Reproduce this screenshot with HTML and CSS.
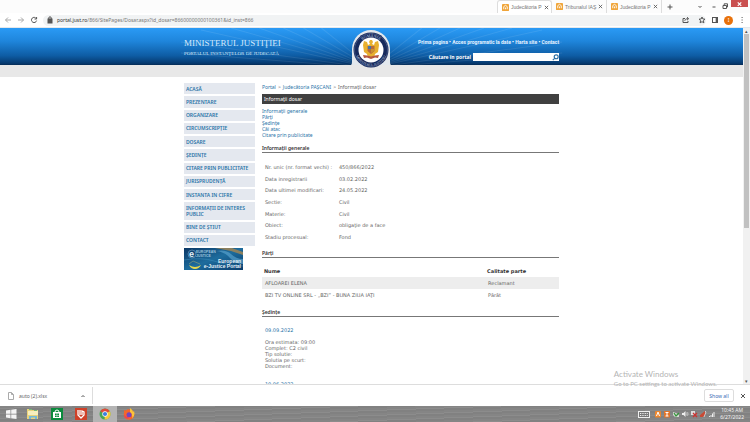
FILE: index.html
```html
<!DOCTYPE html>
<html lang="ro">
<head>
<meta charset="utf-8">
<title>Informaţii dosar</title>
<link rel="stylesheet" href="styles.css">
</head>
<body>
<header class="tabbar">
  <div class="tabs">
    <div class="tab active"><svg class="fav" viewBox="0 0 8 8"><rect width="8" height="8" rx="1" fill="#f0a53a"/><path d="M2 6V3l2-1.500 2 1.500v3M4 4v2" stroke="#fff" fill="none"/></svg><span class="tab-title">Judecătoria P</span><button class="x" aria-label="Închide"><svg viewBox="0 0 6 6"><path d="M1 1l4 4M5 1L1 5"/></svg></button></div>
    <div class="tab"><svg class="fav" viewBox="0 0 8 8"><rect width="8" height="8" rx="1" fill="#f0a53a"/><path d="M2 6V3l2-1.500 2 1.500v3M4 4v2" stroke="#fff" fill="none"/></svg><span class="tab-title">Tribunalul IAŞ</span><button class="x" aria-label="Închide"><svg viewBox="0 0 6 6"><path d="M1 1l4 4M5 1L1 5"/></svg></button></div>
    <div class="tab"><svg class="fav" viewBox="0 0 8 8"><rect width="8" height="8" rx="1" fill="#f0a53a"/><path d="M2 6V3l2-1.500 2 1.500v3M4 4v2" stroke="#fff" fill="none"/></svg><span class="tab-title">Judecătoria P</span><button class="x" aria-label="Închide"><svg viewBox="0 0 6 6"><path d="M1 1l4 4M5 1L1 5"/></svg></button></div>
  </div>
  <button class="plus" aria-label="Filă nouă"><svg viewBox="0 0 6 6"><path d="M3 .5v5M.5 3h5"/></svg></button>
  <div class="window-controls">
    <button class="down" aria-label="Caută file"><svg viewBox="0 0 6 6"><path d="M1.500 2L3 3.500 4.500 2"/></svg></button>
    <button aria-label="Minimizează"><svg viewBox="0 0 6 6"><path d="M1.500 4h3"/></svg></button>
    <button aria-label="Restabilește"><svg viewBox="0 0 6 6"><path d="M1 2.500h3.500v3H1zM2.200 2V.8h3.300V4h-.8"/></svg></button>
    <button class="close" aria-label="Închide fereastra"><svg viewBox="0 0 6 6"><path d="M1.500 2l3 3M4.500 2l-3 3"/></svg></button>
  </div>
</header>
<div class="toolbar">
  <button class="pale" aria-label="Înapoi"><svg viewBox="0 0 8 8"><path d="M7 4H1.500M4 1.500L1.500 4 4 6.500"/></svg></button>
  <button class="pale" aria-label="Înainte"><svg viewBox="0 0 8 8"><path d="M1 4h5.500M4 1.500L6.500 4 4 6.500"/></svg></button>
  <button aria-label="Reîncarcă"><svg viewBox="0 0 8 8"><path d="M6.300 2.600A2.600 2.600 0 1 0 6.600 4.600M6.600 1v2H4.500"/></svg></button>
  <div class="address">
    <svg class="lock" viewBox="0 0 6 8"><rect x="1" y="3" width="4" height="4" fill="#555"/><path d="M1.800 3V2a1.200 1.200 0 0 1 2.400 0v1"/></svg>
    <span class="url"><b>portal.just.ro</b>/866/SitePages/Dosar.aspx?id_dosar=86600000000100361&amp;id_inst=866</span>
    <button aria-label="Partajează"><svg viewBox="0 0 8 8"><path d="M3 2.500H1v4h5V5M2.800 4.800C3 3.300 4 2.700 6 2.700M5 1.200l1.700 1.500L5 4.200"/></svg></button>
    <button aria-label="Marcaj"><svg viewBox="0 0 8 8"><path d="M4 1l.9 2 2.100.2-1.600 1.400.5 2.200L4 5.700 2.100 6.800l.5-2.200L1 3.200 3.100 3z"/></svg></button>
  </div>
  <button aria-label="Panou lateral"><svg viewBox="0 0 8 8"><rect x="1.500" y="1.500" width="5" height="5"/><path d="M5.200 1.500h1.300v5H5.200z" fill="#444"/></svg></button>
  <button class="avatar">I</button>
  <button aria-label="Meniu"><svg viewBox="0 0 8 8"><path d="M3.600 1.500h1M3.600 4h1M3.600 6.500h1"/></svg></button>
</div>

<div class="viewport">
  <div class="page">
    <header class="banner">
      <svg class="rays" viewBox="0 0 400 37" preserveAspectRatio="none"><g stroke="#fff" stroke-opacity=".09"><path d="M200 40L30 2M200 40L60 0M200 40L88 0M200 40L112 0M200 40L132 0M200 40L150 0M200 40L250 0M200 40L268 0M200 40L288 0M200 40L312 0M200 40L340 0M200 40L370 2M200 40L10 14M200 40L10 25M200 40L390 14M200 40L390 25"/></g></svg>
      <div class="container banner-grid">
        <div class="brand"><h1>MINISTERUL JUSTIŢIEI</h1><p>PORTALUL INSTANŢELOR DE JUDECATĂ</p></div>
        <svg class="seal" viewBox="0 0 40 40">
          <path d="M0 36Q1 36 1 33V20a19 19 0 0 1 38 0v13q0 3 1 3z" fill="#e3e8ed"/>
          <circle cx="20" cy="21" r="17.500" fill="#16295c"/>
          <circle cx="20" cy="21" r="16.500" fill="none" stroke="#66769e" stroke-width=".5"/>
          <circle cx="20" cy="21" r="12.500" fill="#fff"/>
          <path id="ring" d="M7 21a13 13 0 0 1 26 0" fill="none"/>
          <path id="ring2" d="M4 21a16 16 0 0 0 32 0" fill="none"/>
          <text font-size="4" fill="#b9c4dc" text-anchor="middle"><textPath href="#ring" startOffset="50%">ROMÂNIA</textPath></text>
          <text font-size="3.500" fill="#b9c4dc" text-anchor="middle"><textPath href="#ring2" startOffset="50%">MINISTERUL JUSTIŢIEI</textPath></text>
          <path d="M18 13l1-2h2l1 2-1 2 2 1 1-3 3-1 1 4-1 7-3 2-1 4h-6l-1-4-3-2-1-7 1-4 3 1 1 3 2-1z" fill="#e8b02f"/>
          <path d="M16.500 17h7v5l-3.500 3-3.500-3z" fill="#b86b3a"/><path d="M17 17h3v3h-3z" fill="#4673a6"/><path d="M20 20h3v2l-3 2z" fill="#c99132"/>
          <path d="M12 26l4 .5 4 1 4-1 4-.5-1 3-3-.5-4 1.500-4-1.500-3 .5z" fill="#b5573f"/>
        </svg>
        <div class="tools">
          <nav class="topnav"><a href="#">Prima pagina</a> • <a href="#">Acces programatic la date</a> • <a href="#">Harta site</a> • <a href="#">Contact</a></nav>
          <form class="search"><label for="q">Căutare în portal</label><div class="field"><input id="q" type="text"><button type="button" aria-label="Caută"><svg viewBox="0 0 6 6"><circle cx="3.600" cy="2.400" r="1.700"/><path d="M2.300 3.700L.7 5.300"/></svg></button></div></form>
        </div>
      </div>
    </header>
    <div class="band"></div>
    <div class="container columns">
      <nav class="side">
        <ul>
          <li><a href="#">ACASĂ</a></li><li><a href="#">PREZENTARE</a></li><li><a href="#">ORGANIZARE</a></li><li><a href="#">CIRCUMSCRIPŢIE</a></li><li><a href="#">DOSARE</a></li><li><a href="#">ŞEDINŢE</a></li><li><a href="#">CITARE PRIN PUBLICITATE</a></li><li><a href="#">JURISPRUDENŢĂ</a></li><li><a href="#">INSTANTA IN CIFRE</a></li><li><a href="#">INFORMAŢII DE INTERES PUBLIC</a></li><li><a href="#">BINE DE ŞTIUT</a></li><li><a href="#">CONTACT</a></li>
        </ul>
        <a class="ejustice" href="#" aria-label="European e-Justice Portal"><svg viewBox="0 0 59 22">
          <defs><linearGradient id="sea" x2="1" y2="1"><stop stop-color="#0b3765"/><stop offset=".5" stop-color="#1d6c9d"/><stop offset="1" stop-color="#0a3c6c"/></linearGradient></defs>
          <rect width="59" height="22" fill="url(#sea)"/>
          <path d="M31 0h17l11 4v3L47 3z" fill="#8a8060"/><path d="M32 3q10-2 15 3t12 5v5q-8 0-13-6T32 3z" fill="#5aa5cf" opacity=".65"/><path d="M0 12q18-3 30 1t29 5" stroke="#4192bd" fill="none" opacity=".5"/>
          <path d="M5 17q6 4 12 0-2 4-6 4t-6-4z" fill="#e7d84d"/><path d="M5 16l4-3 7 3" stroke="#9aa879" stroke-width=".6" fill="none"/>
          <circle cx="8" cy="6" r="4" fill="none" stroke="#8bb9d8" stroke-width=".5"/>
          <g fill="#e4f0f8" font-weight="bold"><text x="5" y="9" font-size="9">e</text><text x="12" y="5" font-size="3.500" fill="#9cc3de">EUROPEAN</text><text x="12" y="9" font-size="3.500" fill="#9cc3de">JUSTICE</text><text x="57" y="15" font-size="5" text-anchor="end">European</text><text x="57" y="20" font-size="5" text-anchor="end">e-Justice Portal</text></g>
        </svg></a>
      </nav>
      <main>
        <div class="crumbs"><a href="#">Portal</a><span>&gt;</span><a href="#">Judecătoria PAŞCANI</a><span>&gt;</span>Informaţii dosar</div>
        <h2 class="titlebar">Informaţii dosar</h2>
        <ul class="toc"><li><a href="#general">Informaţii generale</a></li><li><a href="#parti">Părţi</a></li><li><a href="#sedinte">Şedinţe</a></li><li><a href="#">Căi atac</a></li><li><a href="#">Citare prin publicitate</a></li></ul>
        <h3 id="general">Informaţii generale</h3>
        <table class="facts">
          <tr><th scope="row">Nr. unic (nr. format vechi) :</th><td>450/866/2022</td></tr>
          <tr><th scope="row">Data inregistrarii</th><td>03.02.2022</td></tr>
          <tr><th scope="row">Data ultimei modificari:</th><td>24.05.2022</td></tr>
          <tr><th scope="row">Sectie:</th><td>Civil</td></tr>
          <tr><th scope="row">Materie:</th><td>Civil</td></tr>
          <tr><th scope="row">Obiect:</th><td>obligaţie de a face</td></tr>
          <tr><th scope="row">Stadiu procesual:</th><td>Fond</td></tr>
        </table>
        <h3 id="parti">Părţi</h3>
        <table class="parties">
          <thead><tr><th>Nume</th><th>Calitate parte</th></tr></thead>
          <tbody><tr><td>AFLOAREI ELENA</td><td>Reclamant</td></tr><tr><td>BZI TV ONLINE SRL - „BZI” - BUNA ZIUA IAŢI</td><td>Pârât</td></tr></tbody>
        </table>
        <h3 id="sedinte">Şedinţe</h3>
        <section class="session"><a href="#">09.09.2022</a><p>Ora estimata: 09:00<br>Complet: C2 civil<br>Tip solutie:<br>Solutia pe scurt:<br>Document:</p></section>
        <section class="session"><a href="#">10.06.2022</a></section>
      </main>
    </div>
  </div>
  <div class="scroll"><span class="up">▴</span><span class="thumb"></span><span class="dn">▾</span></div>
</div>

<div class="watermark"><p>Activate Windows</p><p>Go to PC settings to activate Windows.</p></div>

<div class="downloads">
  <div class="file"><svg viewBox="0 0 8 8"><path d="M1.500.5h3l2 2v5h-5zM4.500.5v2h2"/></svg><span>auto (2).xlsx</span><button aria-label="Opțiuni"><svg viewBox="0 0 6 6"><path d="M1.500 4L3 2.500 4.500 4"/></svg></button></div>
  <button class="showall">Show all</button>
  <button class="dismiss" aria-label="Închide bara"><svg viewBox="0 0 6 6"><path d="M1 1l4 4M5 1L1 5"/></svg></button>
</div>
<footer class="taskbar">
  <div class="apps">
    <button aria-label="Start"><svg viewBox="0 0 12 12"><path d="M1 2.500l4.500-.7v3.900H1zM6.200 1.700L11.500 1v4.700H6.200zM1 6.400h4.500v3.900L1 9.600zM6.200 6.400h5.300V11l-5.300-.7z" fill="#f4f4f4"/></svg></button>
    <button aria-label="Explorer"><svg viewBox="0 0 12 12"><path d="M0 1h4l1 1h6v9H0z" fill="#e9d27c"/><path d="M1 3h10v4H1z" fill="#f8efbd"/><path d="M2 1.500h3M7 2.500h3" stroke="#77b978"/><path d="M2 11V8h8v3H8V9.500H4V11z" fill="#74b9d9"/></svg></button>
    <button aria-label="Store"><svg viewBox="0 0 12 12"><rect width="12" height="12" fill="#0b8a3c"/><path d="M2 4h8v6H2z" fill="#fff"/><path d="M4 4q0-2 2-2t2 2" stroke="#fff" fill="none"/><path d="M4 5.500h1.700V7H4zM6.200 5.500H8V7H6.200zM4 7.500h1.700V9H4zM6.200 7.500H8V9H6.200z" fill="#0b8a3c"/></svg></button>
    <button aria-label="PDF"><svg viewBox="0 0 12 12"><rect width="12" height="12" fill="#cf4128"/><path d="M3 2v5l3 3 3-3V4L7 3v4M5 2v5" stroke="#fff" stroke-width="1.300" fill="none"/></svg></button>
    <button class="current" aria-label="Chrome"><svg viewBox="0 0 12 12"><circle cx="6" cy="6" r="5.500" fill="#4aa653"/><path d="M6 6L1.200 3.300A5.500 5.500 0 0 1 10.800 3.300z" fill="#e04a3b"/><path d="M6 6l4.800-2.700A5.500 5.500 0 0 1 5.600 11.500z" fill="#f5c93c"/><circle cx="6" cy="6" r="2.700" fill="#fff"/><circle cx="6" cy="6" r="2.100" fill="#3d7fe0"/></svg></button>
    <button aria-label="Firefox"><svg viewBox="0 0 12 12"><circle cx="6" cy="6.500" r="5.300" fill="#f4672b"/><path d="M1 5V2l2 1 2-2 1 2z" fill="#f4672b"/><path d="M7 0q3 2 3 4l1-1q1.500 5-2 7.500Q10 6 7 4z" fill="#fbc43a"/><circle cx="6" cy="6.800" r="2.500" fill="#7445bd"/><path d="M1 6q2 4 6 3-2 3-4.500 1Q1 9 1 6z" fill="#ee3d59"/></svg></button>
  </div>
  <div class="tray">
    <svg class="keyboard" viewBox="0 0 12 8"><rect x=".5" y="1.500" width="11" height="6" fill="#777" stroke="#eee"/><path d="M2 3.500h8M2 5.500h8" stroke="#eee" stroke-dasharray="1 .7"/></svg>
    <svg viewBox="0 0 8 8"><rect x="1" y="1" width="6" height="6.500" rx="1" fill="#ee872d"/><path d="M2.500 6L4 2l1.500 4" stroke="#fff" fill="none"/></svg>
    <svg viewBox="0 0 8 8"><rect x="1" y="1" width="6" height="6.500" fill="#e2752a"/><path d="M2.500 2.500h3M4 2.500V6M2.500 6h3" stroke="#fff" fill="none"/></svg>
    <svg viewBox="0 0 8 8"><path d="M1 2l3 1 3 2v2H3L1 5z" fill="#d6ded4"/><path d="M2 3l2 3 3-3" stroke="#36943c" stroke-width="1.300" fill="none"/></svg>
    <svg viewBox="0 0 8 8"><path d="M1 3h1.500L4.500 1v6l-2-2H1z" fill="#eee"/><path d="M5.500 2.500q1 1.500 0 3M6.500 2q1.200 2 0 4" stroke="#ddd" stroke-width=".6" fill="none"/></svg>
    <svg viewBox="0 0 8 8"><path d="M1 1h4v4H1z" fill="#ddd"/><path d="M3 3l4 4M7 3L3 7" stroke="#cd3431" stroke-width="1.300"/></svg>
    <svg viewBox="0 0 8 8"><path d="M1 5l5-4v4L4 7H1z" fill="#c84a35"/><path d="M6 1l1 1-2 5" stroke="#eee" stroke-width=".7" fill="none"/></svg>
    <svg viewBox="0 0 8 8"><path d="M1.500 7V6M3 7V5M4.500 7V3.500M6 7V2" stroke="#eee"/></svg>
    <div class="clock"><span>10:45 AM</span><span>6/27/2022</span></div>
  </div>
</footer>
</body>
</html>
```
FILE: styles.css
```css
* { box-sizing: border-box; margin: 0; padding: 0; }
html, body { height: 100%; }
body {
  display: flex; flex-direction: column; overflow: hidden; position: relative;
  font: 5px/6px "Noto Sans", sans-serif; color: #666; background: #fff;
}
button { border: 0; background: none; font: inherit; color: inherit; }
button svg { display: block; width: 100%; fill: none; stroke: #555; stroke-width: 1px; }
a { color: #2a74a8; text-decoration: none; }
ul { list-style: none; }

.tabbar { display: flex; align-items: flex-start; height: 13px; background: #fcfcfc; }
.tabs { display: flex; margin-left: auto; }
.tab { display: flex; align-items: center; gap: 2px; width: 55px; height: 13px; padding: 0 3px 0 4px; border-right: 1px solid #ddd; }
.tab.active { background: #fff; border: 1px solid #ddd; border-bottom: 0; border-radius: 3px 3px 0 0; }
.fav { width: 7px; height: 7px; flex: none; }
.tab-title { flex: 1; font-family: "Liberation Sans", sans-serif; white-space: nowrap; color: #777; }
.x { width: 5px; flex: none; }
.plus { width: 6px; margin: 4px 24px 0 5px; }
.window-controls { display: flex; gap: 5px; padding-right: 2px; }
.window-controls button { width: 6px; padding-top: 1px; }
.window-controls .down { padding-top: 4px; margin-right: 3px; }
.window-controls .close { width: 17px; height: 7px; padding: 0 5px; background: #c94f4f; margin-left: -2px; }
.close svg { stroke: #fff; }

.toolbar { display: flex; align-items: center; gap: 5px; height: 15px; padding: 0 4px; border-bottom: 1px solid #e4e8ec; background: #fff; }
.toolbar button { width: 8px; flex: none; }
.toolbar .pale svg { stroke: #aaa; }
.address { flex: 1; display: flex; align-items: center; gap: 8px; height: 11px; padding: 0 0 0 4px; border-radius: 6px; background: #f1f3f4; }
.lock { width: 6px; height: 8px; fill: none; stroke: #555; margin-right: -4px; }
.url { flex: 1; font: 5px/8px "Noto Sans", sans-serif; color: #777; white-space: nowrap; }
.url b { font-weight: 400; color: #333; }
.toolbar .avatar { height: 9px; width: 9px; border-radius: 50%; background: #e8710a; color: #fff; }

.viewport { flex: 1; min-height: 0; display: flex; overflow: hidden; }
.page { flex: 1; overflow: hidden; }
.container { width: 50.500%; margin: 0 auto; }
.banner { position: relative; height: 37px; background: linear-gradient(#2a9af5, #1f86dc 35%, #0e5ca4 75%, #063a70 95%, #052c55); color: #fff; }
.rays { position: absolute; left: 23%; top: 0; width: 54%; height: 37px; }
.banner-grid { position: relative; display: grid; grid-template-columns: 1fr 40px 1fr; }
.brand { padding-top: 10px; color: #d5e9fa; font-family: "Liberation Serif", serif; white-space: nowrap; }
.brand h1 { font-size: 9px; line-height: 11px; font-weight: 400; }
.brand p { font-size: 5px; line-height: 9px; }
.seal { width: 40px; height: 40px; margin: 1px 0 -4px; overflow: visible; z-index: 1; }
.seal text { font-family: "Liberation Serif", serif; }
.tools { padding-top: 11px; font-weight: 700; }
.topnav { font-family: Roboto, sans-serif; text-align: right; white-space: nowrap; }
.topnav a { color: #e4f2ff; }
.search { display: flex; align-items: center; justify-content: flex-end; gap: 2px; margin-top: 8px; white-space: nowrap; }
.field { display: flex; align-items: center; width: 86px; height: 8px; background: #fff; }
.field input { flex: 1; min-width: 0; height: 8px; border: 0; font: inherit; }
.field button { width: 7px; }
.field svg { stroke: #2a6ea4; }
.band { height: 12px; background: #e8e8e8; }

.columns { display: grid; grid-template-columns: 71px 1fr; gap: 7px; padding-top: 6px; }
.side ul { display: grid; gap: 2px; min-height: 163px; }
.side li { display: flex; align-items: center; padding: 2px; background: #e4e8ef; font-weight: 600; }
.ejustice { display: block; width: 59px; margin-top: 2px; }
.ejustice svg { display: block; width: 100%; font-family: "Liberation Sans", sans-serif; }
main { padding-top: 1px; }
.crumbs { margin-bottom: 4px; }
.crumbs span { margin: 0 2px; }
.titlebar { padding: 2px; font-size: 5px; line-height: 6px; font-weight: 400; color: #fff; background: #404040; }
.toc { margin: 4px 0 7px; }
h3 { padding-bottom: 1px; border-bottom: 1px solid #777; font-size: 5px; line-height: 6px; font-weight: 600; color: #333; }
table { border-collapse: collapse; width: 100%; text-align: left; }
.facts, .parties, .session { font-family: "DejaVu Sans", sans-serif; }
.facts { height: 82px; margin: 8px 0 7px; }
.facts th { width: 77px; padding-left: 3px; font-weight: 400; }
.parties { margin: 7px 0 8px; }
.parties th, .parties td { height: 12px; padding-left: 3px; }
.parties th { padding-left: 2px; color: #333; }
.parties th + th { width: 74px; }
.parties tbody tr:first-child { background: #ededed; }
.session { padding: 10px 3px 0; }
.session p { margin: 6px 0 2px; }

.scroll { width: 7px; display: flex; flex-direction: column; align-items: center; background: #f1f1f1; color: #555; }
.thumb { width: 5px; height: 194px; background: #c1c1c1; }
.dn { margin-top: auto; }
.watermark { position: absolute; right: 33px; bottom: 34px; font-family: Lato, sans-serif; color: #b4b4b4; white-space: nowrap; }
.watermark p { font-size: 6px; line-height: 8px; }
.watermark p:first-child { font-size: 8px; line-height: 12px; }

.downloads { display: flex; align-items: center; height: 22px; border-top: 1px solid #ddd; background: #fff; padding-right: 4px; }
.file { display: flex; align-items: center; gap: 4px; width: 93px; height: 17px; padding: 0 6px 0 7px; border-right: 1px solid #ddd; }
.file > svg { width: 8px; fill: none; stroke: #aaa; }
.file span { flex: 1; }
.file button { width: 6px; }
.showall { margin-left: auto; width: 30px; height: 13px; border: 1px solid #ddd; border-radius: 2px; color: #356bb5; }
.dismiss { width: 6px; margin-left: 6px; }

.taskbar { display: flex; justify-content: space-between; height: 16px; background: repeating-linear-gradient(178deg, #858585 0 2px, #8c8c8c 2px 3px, #818181 3px 5px); color: #f4f4f4; }
.apps { display: flex; }
.apps button { width: 24px; padding: 2px 6px; }
.apps button:first-child { width: 21px; padding: 2px 4px 2px 5px; }
.apps .current { background: #b4b4b4; }
.apps svg { stroke: none; width: 12px; }
.tray { display: flex; align-items: center; gap: 1px; padding-right: 6px; }
.tray svg { width: 8px; }
.tray .keyboard { width: 12px; margin-right: 3px; }
.clock { display: grid; margin-left: 3px; line-height: 7px; text-align: center; }
```
